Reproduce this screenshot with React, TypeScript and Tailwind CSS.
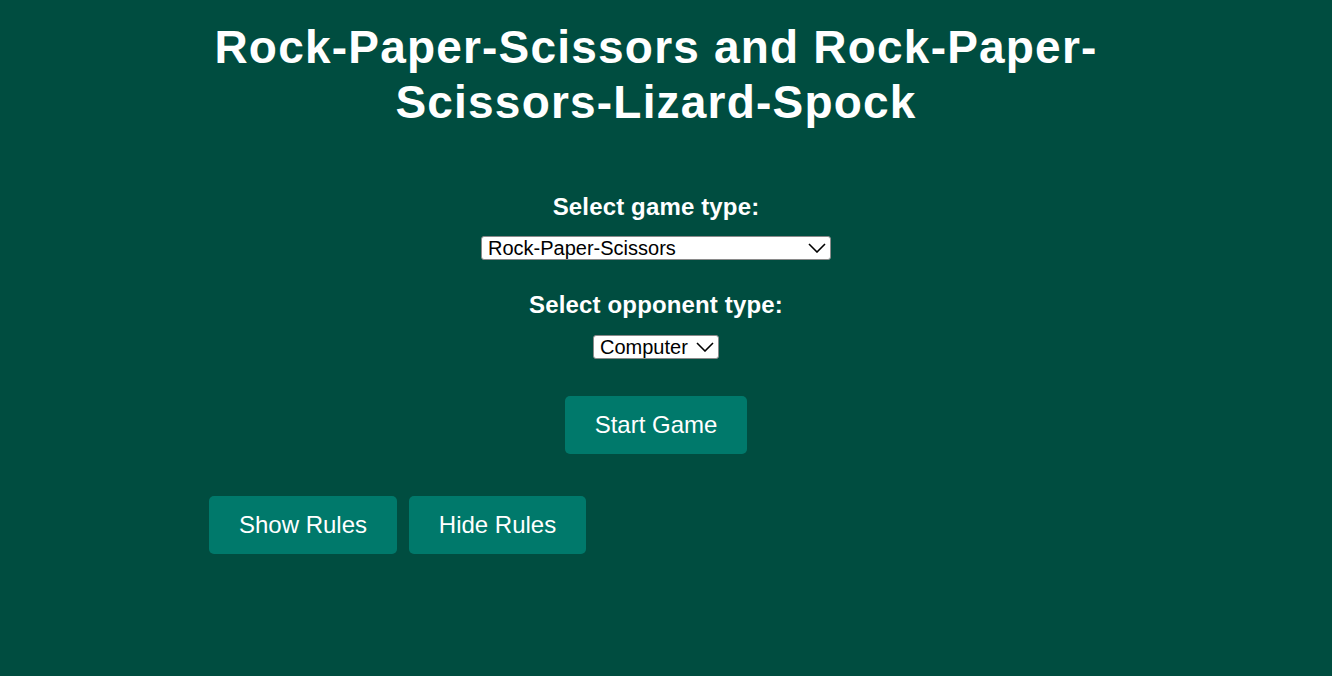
import { useState } from "react";

const font = { fontFamily: '"Liberation Sans", Arial, sans-serif' };

function Chevron() {
    return (
        <svg width="18" height="10" viewBox="0 0 18 10" className="pointer-events-none absolute right-[5px] top-1/2 -translate-y-1/2">
            <path d="M1 1 L9 9 L17 1" fill="none" stroke="#000" strokeWidth="1.6" />
        </svg>
    );
}

export default function App() {
    const [game, setGame] = useState("rps");
    const [opponent, setOpponent] = useState("computer");

    return (
        <div className="min-h-[676px] w-full bg-[#004d40] text-white" style={font}>
            <div className="ml-[209px] w-[894px] pt-[20px] flex flex-col">
                <h1 className="text-center text-[46px] leading-[55px] font-bold tracking-[1.2px]">
                    Rock-Paper-Scissors and Rock-Paper-Scissors-Lizard-Spock
                </h1>

                <div className="mt-[64px] flex flex-col items-center">
                    <label className="text-[24px] leading-[26px] font-bold tracking-[0.15px]">Select game type:</label>
                    <div className="relative mt-[16px]">
                        <select
                            value={game}
                            onChange={(e) => setGame(e.target.value)}
                            className="appearance-none block w-[350px] h-[24px] bg-white text-black text-[20px] leading-[22px] pl-[6px] rounded-[3px] border border-[#8a8a8a] outline-none"
                        >
                            <option value="rps">Rock-Paper-Scissors</option>
                            <option value="rpsls">Rock-Paper-Scissors-Lizard-Spock</option>
                        </select>
                        <Chevron />
                    </div>

                    <label className="mt-[32px] text-[24px] leading-[26px] font-bold tracking-[0.15px]">Select opponent type:</label>
                    <div className="relative mt-[17px]">
                        <select
                            value={opponent}
                            onChange={(e) => setOpponent(e.target.value)}
                            className="appearance-none block w-[126px] h-[24px] bg-white text-black text-[20px] leading-[22px] pl-[6px] rounded-[3px] border border-[#8a8a8a] outline-none"
                        >
                            <option value="computer">Computer</option>
                            <option value="human">Human</option>
                        </select>
                        <Chevron />
                    </div>

                    <button className="mt-[37px] w-[182px] h-[58px] rounded-[5px] bg-[#00796b] text-[24px] text-white">
                        Start Game
                    </button>
                </div>

                <div className="mt-[42px] flex gap-[12px]">
                    <button className="w-[188px] h-[58px] rounded-[5px] bg-[#00796b] text-[24px] text-white">Show Rules</button>
                    <button className="w-[177px] h-[58px] rounded-[5px] bg-[#00796b] text-[24px] text-white">Hide Rules</button>
                </div>
            </div>
        </div>
    );
}
